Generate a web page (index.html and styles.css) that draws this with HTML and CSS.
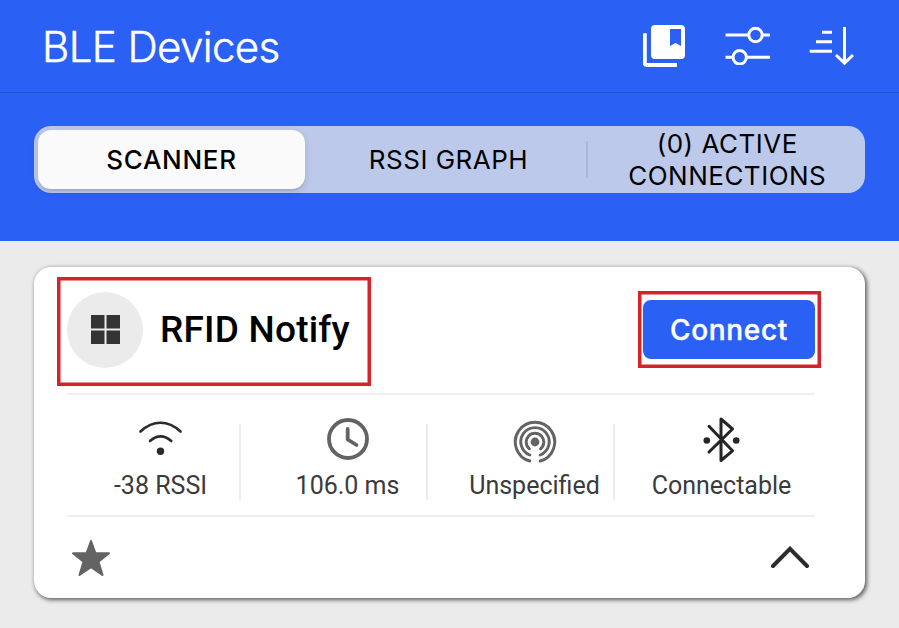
FILE: index.html
```html
<!DOCTYPE html>
<html lang="en">
<head>
<meta charset="utf-8">
<title>BLE Devices</title>
<link rel="stylesheet" href="styles.css">
</head>
<body>
<header class="topbar">
  <h1 class="title">BLE Devices</h1>
  <div class="actions">
    <svg class="icon" width="44" height="44" viewBox="0 0 44 44">
      <path d="M1.800 8.300V38Q1.800 40 3.800 40H34" fill="none" stroke="#fff" stroke-width="4"/>
      <path fill="#fff" fill-rule="evenodd" d="M12 0H38Q42 0 42 4V30Q42 34 38 34H12Q8 34 8 30V4Q8 0 12 0ZM27 4V21L32.500 18L38 21V4Z"/>
    </svg>
    <svg class="icon" width="46" height="40" viewBox="0 0 46 40" fill="none" stroke="#fff" stroke-width="3">
      <path d="M.500 10H23.500M37 10H45M.500 32.300H8M21.500 32.300H45"/>
      <circle cx="30.500" cy="10" r="6.700"/><circle cx="14.700" cy="32.300" r="6.700"/>
    </svg>
    <svg class="icon" width="46" height="40" viewBox="0 0 46 40" fill="none" stroke="#fff" stroke-width="3">
      <path d="M13 7.200H23M7 16.700H23M.700 26.200H23M35.500 2V38M27 30L35.500 38.200L44 30"/>
    </svg>
  </div>
</header>
<nav class="tabs-bar">
  <div class="tabs">
    <div class="tab tab-active">SCANNER</div>
    <div class="tab tab-graph">RSSI GRAPH</div>
    <div class="tab-divider"></div>
    <div class="tab tab-connections">(0) ACTIVE<br>CONNECTIONS</div>
  </div>
</nav>
<main class="content">
  <article class="card">
    <div class="card-head">
      <div class="device">
        <div class="avatar">
          <svg width="29" height="29" viewBox="0 0 29 29" fill="#343434"><path d="M0 0H13.500V13.500H0ZM15.500 0H29V13.500H15.500ZM0 15.500H13.500V29H0ZM15.500 15.500H29V29H15.500Z"/></svg>
        </div>
        <h2 class="device-name">RFID Notify</h2>
      </div>
      <div class="connect-frame"><button class="connect">Connect</button></div>
    </div>
    <div class="stats">
      <div class="stat">
        <svg class="stat-icon" width="46" height="46" viewBox="0 0 46 46" fill="none" stroke="#2a2a2a" stroke-width="2.600" stroke-linecap="round">
          <path d="M2.500 14.500Q12 5.800 22.500 5.800T42.500 14.500M12 24Q22.500 14.800 33.300 24"/><circle cx="22.500" cy="34.200" r="3.700" fill="#2a2a2a" stroke="none"/>
        </svg>
        <span class="label">-38 RSSI</span>
      </div>
      <div class="stat">
        <svg class="stat-icon" width="46" height="46" viewBox="0 0 46 46" fill="none" stroke="#636363" stroke-width="3.800" stroke-linecap="round" stroke-linejoin="round">
          <circle cx="23" cy="22" r="19"/><path d="M22.700 12V22.500L31.500 28"/>
        </svg>
        <span class="label">106.0 ms</span>
      </div>
      <div class="stat">
        <svg class="stat-icon" width="46" height="46" viewBox="0 0 46 46" fill="none" stroke="#636363" stroke-width="2.900" stroke-linecap="round">
          <path d="M17.800 44A19.700 19.700 0 1 1 28.200 44M17.800 38A14.200 14.200 0 1 1 28.200 38M17.400 31.800A8.800 8.800 0 1 1 28.600 31.800"/><circle cx="23" cy="25" r="4.400" fill="#636363" stroke="none"/>
        </svg>
        <span class="label">Unspecified</span>
      </div>
      <div class="stat">
        <svg class="stat-icon" width="46" height="46" viewBox="0 0 46 46" fill="none" stroke="#252525" stroke-width="3" stroke-linecap="round" stroke-linejoin="round">
          <path d="M10 9.300L33.500 33.800L22 43.500V2L33.500 12L10 35"/><circle cx="7.800" cy="23.500" r="3.300" fill="#252525" stroke="none"/><circle cx="37.200" cy="23.500" r="3.300" fill="#252525" stroke="none"/>
        </svg>
        <span class="label">Connectable</span>
      </div>
    </div>
    <div class="card-foot">
      <svg width="38" height="36" viewBox="0 0 38 36" fill="#636363" stroke="#636363" stroke-width="2" stroke-linejoin="round"><path d="M19 1L23.500 13.300H37L26.500 21.700L30.500 35L19 27.200L7.500 35L11.500 21.700L1 13.300H14.500Z"/></svg>
      <svg width="38" height="24" viewBox="0 0 38 24" fill="none" stroke="#2c2c2c" stroke-width="4" stroke-linecap="round" stroke-linejoin="miter"><path d="M2 20L19 2.800L36 20"/></svg>
    </div>
  </article>
</main>
</body>
</html>
```
FILE: styles.css
```css
* { box-sizing: border-box; }
body {
  margin: 0;
  height: 628px;
  overflow: hidden;
  background: #ebebeb;
  color: #000;
  font-family: Inter, "Liberation Sans", sans-serif;
}
svg { display: block; }
h1, h2 { margin: 0; }

.topbar {
  height: 93px;
  padding: 0 44px 0 42px;
  display: flex;
  justify-content: space-between;
  background: #2b60f4;
  border-bottom: 1px solid #2350cc;
}
.title {
  color: #fff;
  font-size: 42px;
  font-weight: 300;
  line-height: 93px;
  letter-spacing: -.600px;
  -webkit-text-stroke: .500px #fff;
  white-space: nowrap;
}
.actions { display: flex; gap: 38px; padding-top: 25px; }

.tabs-bar {
  height: 148px;
  padding: 33px 34px 0;
  background: #2b60f4;
}
.tabs {
  height: 67px;
  padding: 4px;
  display: flex;
  align-items: center;
  background: #bdc9eb;
  border-radius: 17px;
}
.tab {
  font-size: 26px;
  line-height: 32px;
  letter-spacing: .500px;
  text-align: center;
  white-space: nowrap;
}
.tab-active {
  width: 267px;
  height: 59px;
  line-height: 60px;
  letter-spacing: .700px;
  font-weight: 500;
  background: #fafafa;
  border-radius: 13px;
  box-shadow: 0 3px 8px rgba(0, 0, 0, .12), 0 2px 1px rgba(0, 0, 0, .06);
}
.tab-graph { width: 281px; padding-left: 6px; }
.tab-divider { width: 1.500px; height: 37px; background: #abb7d9; }
.tab-connections { flex: 1; padding-left: 6px; }

.content { padding: 26px 34px 0; }
.card {
  height: 331px;
  padding-top: 10px;
  background: #fff;
  border-radius: 17px;
  box-shadow: 1.500px 1.500px 4px rgba(0, 0, 0, .6);
}
.card-head {
  display: flex;
  justify-content: space-between;
  align-items: flex-start;
  height: 116px;
  padding: 0 44px 0 23px;
}
.device {
  width: 314px;
  height: 109px;
  padding-left: 7px;
  display: flex;
  align-items: center;
  border: 3px solid #d5222b;
  box-shadow: inset 0 0 0 .500px #d5222b;
}
.avatar {
  width: 76px;
  height: 76px;
  margin-right: 17px;
  margin-bottom: 3px;
  display: grid;
  place-items: center;
  border-radius: 50%;
  background: #ebebeb;
}
.avatar svg { margin-top: -2px; }
.device-name {
  font: 500 37px/44px Roboto, sans-serif;
  letter-spacing: .200px;
  margin-bottom: 4px;
  white-space: nowrap;
}
.connect-frame {
  width: 183px;
  height: 77px;
  margin-top: 14px;
  padding: 6px 3px 6px 2px;
  border: 3px solid #d5222b;
  box-shadow: inset 0 0 0 .500px #d5222b;
}
.connect {
  display: block;
  width: 172px;
  height: 59px;
  padding: 2px 0 0;
  border: 0;
  border-radius: 8px;
  background: #2b60f4;
  color: #fff;
  font: 500 28px/57px Inter, sans-serif;
  letter-spacing: .700px;
  -webkit-text-stroke: .400px #fff;
}
.stats {
  height: 124px;
  margin: 0 50px 0 33px;
  display: grid;
  grid-template-columns: repeat(4, 187px);
  border-top: 2px solid #f0f0f1;
  border-bottom: 2px solid #f0f0f1;
}
.stat {
  display: flex;
  flex-direction: column;
  align-items: center;
  padding-top: 22px;
  background: linear-gradient(#ededee, #ededee) 172px 29px / 2px 76px no-repeat;
}
.stat:last-child { background: none; }
.label {
  margin-top: 7px;
  font: 400 25px/32px Roboto, sans-serif;
  color: #3b3b3b;
  white-space: nowrap;
}
.card-foot {
  height: 81px;
  padding: 1px 56px 0 38px;
  display: flex;
  align-items: center;
  justify-content: space-between;
}
```
